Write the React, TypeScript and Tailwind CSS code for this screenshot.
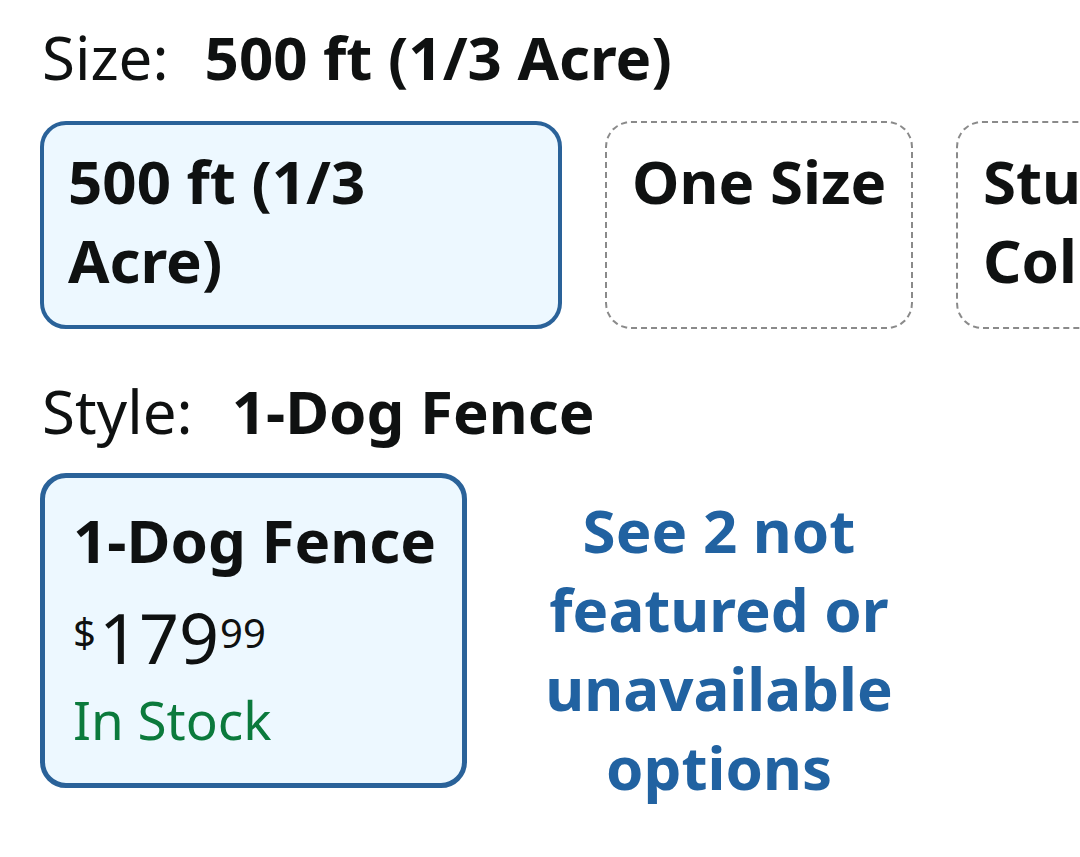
const font = { fontFamily: '"Noto Sans", "Open Sans", sans-serif' }

function VariationLabel({ name, value, gap }: { name: string; value: string; gap: string }) {
  return (
    <div className="flex text-[60px] leading-[79px] text-[#0f1111] whitespace-nowrap">
      <span>{name}:</span>
      <span className={`font-bold ${gap}`}>{value}</span>
    </div>
  )
}

function SizeOption({ label, selected, width }: { label: string; selected?: boolean; width: string }) {
  return (
    <div
      className={
        selected
          ? `shrink-0 ${width} rounded-[26px] border-4 border-[#2a6299] bg-[#edf8ff] pl-[24px] pr-[60px] pt-[17px] pb-[25px]`
          : `shrink-0 ${width} rounded-[26px] border-2 border-dashed border-[#8a8a8a] bg-white pl-[25px] pr-4 pt-[19px] pb-[27px]`
      }
    >
      <div className="text-[60px] leading-[79px] font-bold text-[#0f1111]">{label}</div>
    </div>
  )
}

export default function App() {
  return (
    <div className="min-h-screen bg-white overflow-hidden" style={font}>
      <div className="pl-[42px] pt-[18px]">
        <VariationLabel name="Size" value="500 ft (1/3 Acre)" gap="ml-[36px]" />
      </div>

      <div className="flex gap-[43px] pl-[40px] mt-[24px] overflow-hidden">
        <SizeOption label="500 ft (1/3 Acre)" selected width="w-[522px]" />
        <SizeOption label="One Size" width="w-[308px]" />
        <SizeOption label="Stubborn Collar" width="w-[330px]" />
      </div>

      <div className="pl-[42px] mt-[43px]">
        <VariationLabel name="Style" value="1-Dog Fence" gap="ml-[39px]" />
      </div>

      <div className="flex items-start pl-[40px] mt-[22px]">
        <div className="w-[427px] shrink-0 rounded-[26px] border-[5px] border-[#2a6299] bg-[#edf8ff] pl-[28px] pr-3 pt-[23px] pb-[28px]">
          <div className="text-[60px] leading-[79px] font-bold text-[#0f1111] whitespace-nowrap">1-Dog Fence</div>
          <div className="flex items-start h-[84px] text-[#0f1111] mt-[15px]">
            <span className="text-[40px] leading-none mt-[17px]">$</span>
            <span className="text-[70px] leading-[84px] ml-[3px]">179</span>
            <span className="text-[40px] leading-none mt-[18px] ml-[1px]">99</span>
          </div>
          <div className="text-[53px] leading-[70px] mt-[6px] text-[#0b7a3c]">In Stock</div>
        </div>

        <div className="w-[400px] ml-[52px] mt-[18px] text-center text-[60px] leading-[79px] font-bold text-[#2162a1]">
          See 2 not featured or unavailable options
        </div>
      </div>
    </div>
  )
}
